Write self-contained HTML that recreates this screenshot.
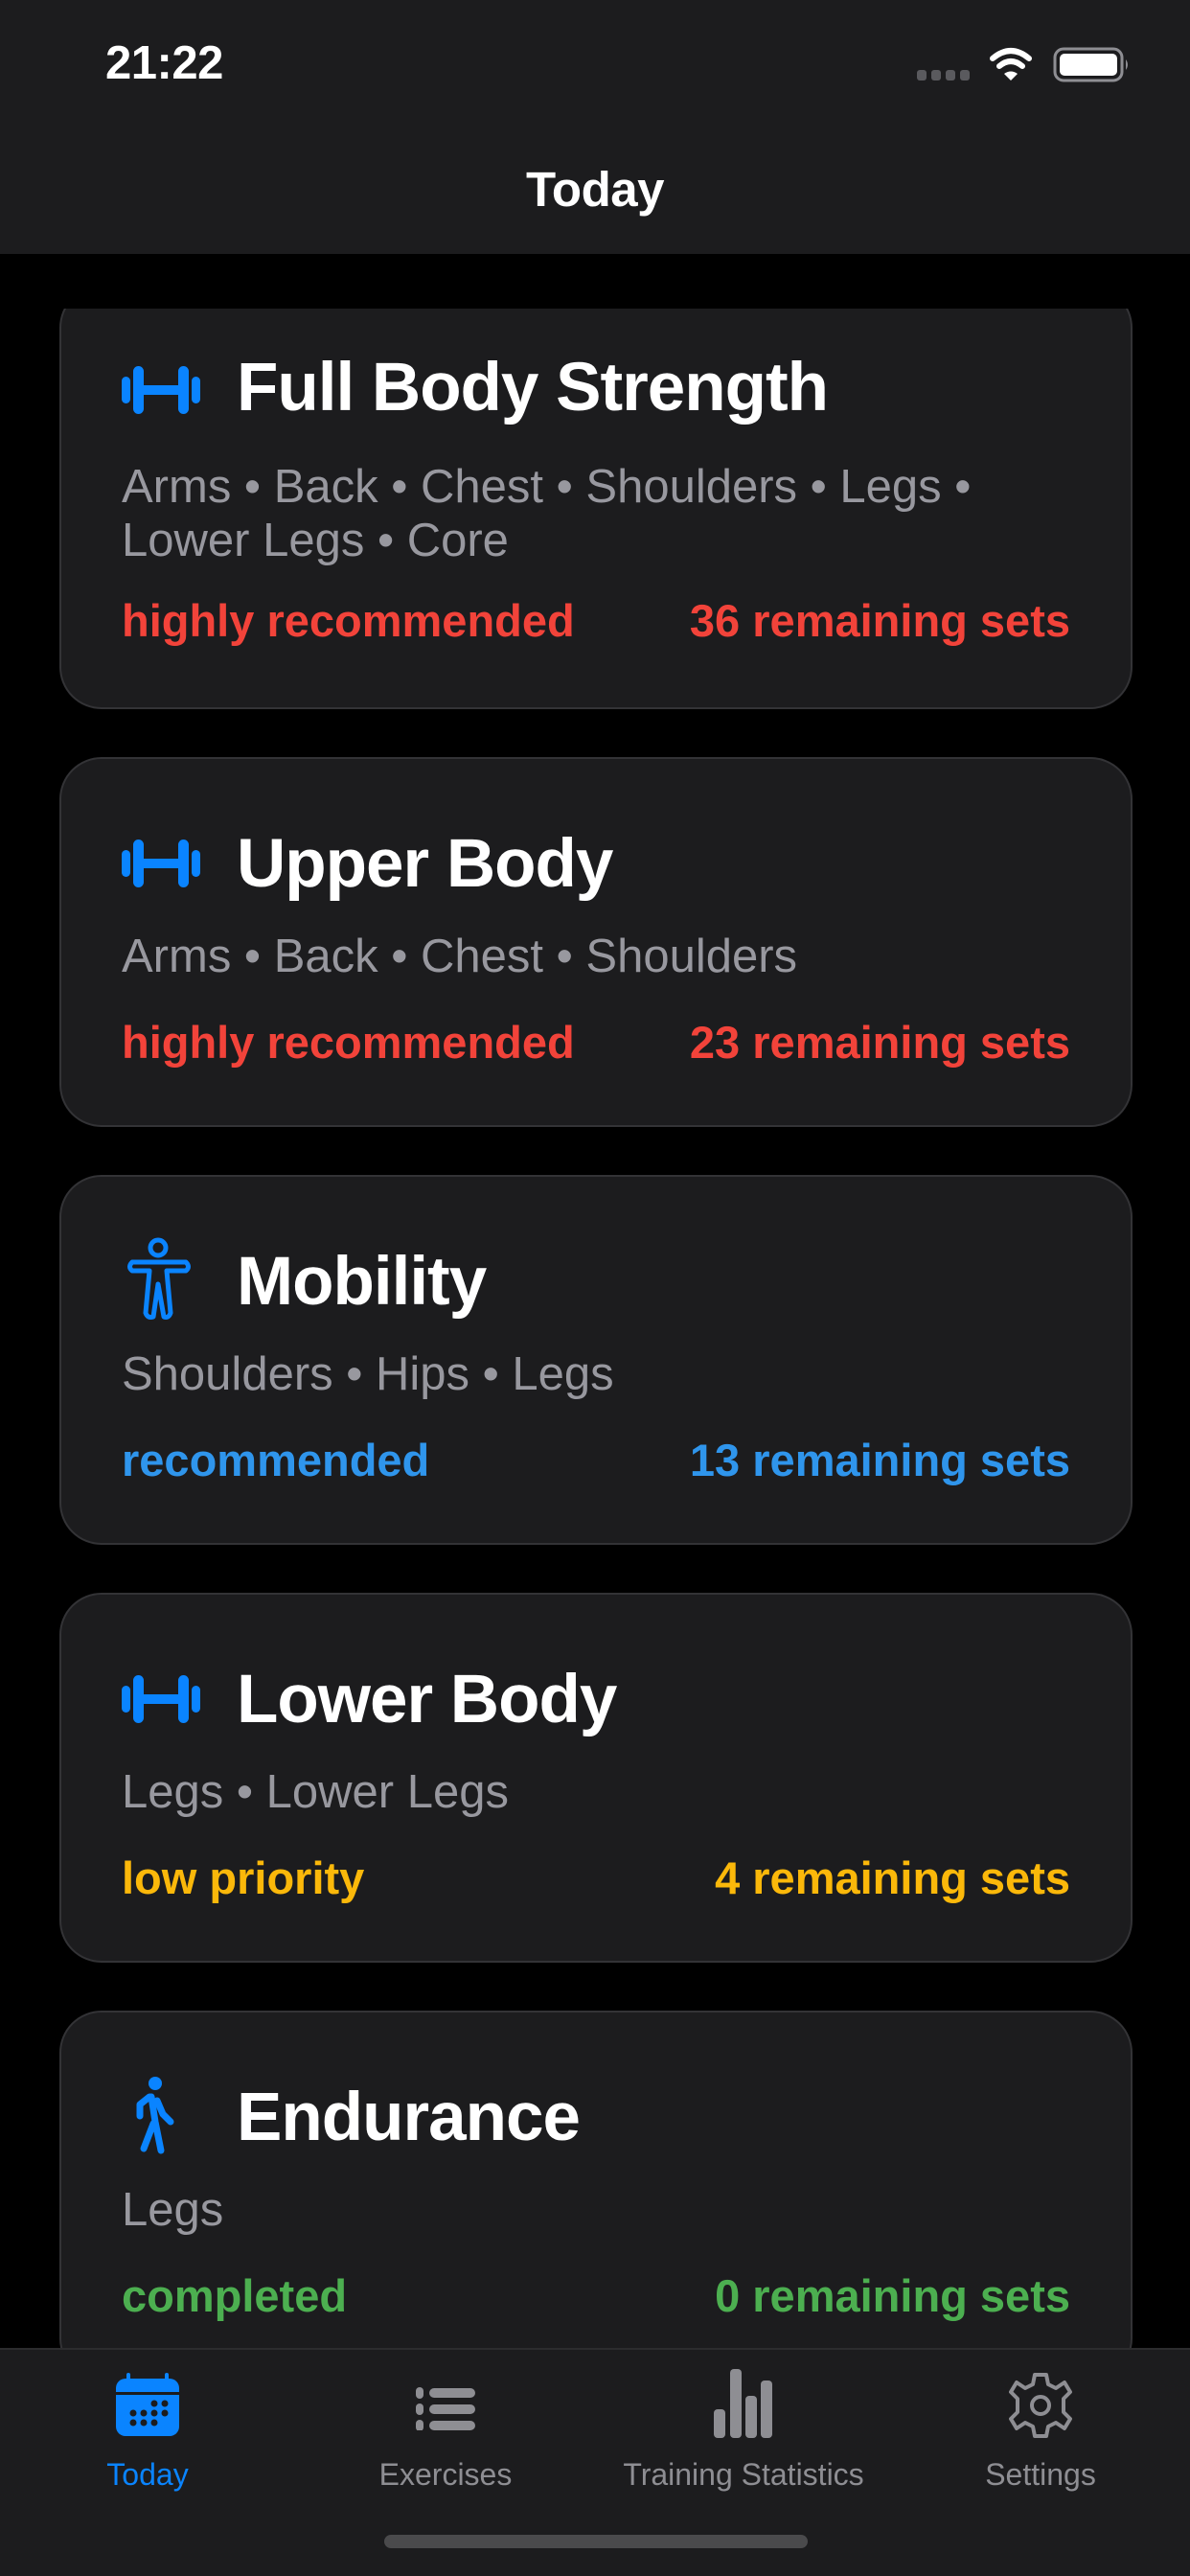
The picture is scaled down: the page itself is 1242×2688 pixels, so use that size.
<!DOCTYPE html>
<html><head><meta charset="utf-8"><style>
*{margin:0;padding:0;box-sizing:border-box}
body{width:1242px;height:2688px;background:#000;position:relative;overflow:hidden;font-family:"Liberation Sans",sans-serif;color:#fff}
.top{position:absolute;left:0;top:0;width:1242px;height:265px;background:#1c1c1e}
.time{position:absolute;left:110px;top:38px;font-size:49px;font-weight:bold;letter-spacing:-0.5px}
.nav{position:absolute;left:0;width:1242px;top:168px;text-align:center;font-size:51px;font-weight:bold;letter-spacing:-0.5px}
.scroll{position:absolute;left:0;top:322px;width:1242px;height:2128px;overflow:hidden}
.card{position:absolute;left:62px;width:1120px;background:#1c1c1e;border:2px solid #333336;border-radius:44px}
.title{position:absolute;left:183px;font-size:71px;font-weight:bold;letter-spacing:-1px;white-space:nowrap}
.icon{position:absolute;left:63px}
.sub{position:absolute;left:63px;font-size:49px;color:#98989f;line-height:56px;white-space:nowrap}
.st{position:absolute;left:63px;right:63px;font-size:47px;font-weight:bold;white-space:nowrap}
.st span{position:absolute;right:0;top:0}
.red{color:#f2433a}.blue{color:#2f95ec}.yel{color:#fbb80a}.grn{color:#4caf50}
.tab{position:absolute;left:0;top:2450px;width:1242px;height:238px;background:#1c1c1e;border-top:2px solid #2c2c2e}
.tl{position:absolute;top:112px;font-size:32px;color:#8e8e93;transform:translateX(-50%);white-space:nowrap}
.home{position:absolute;left:401px;top:2645px;width:442px;height:14px;border-radius:7px;background:#4a4a4c}
</style></head><body>
<div class="top">
 <div class="time">21:22</div>
 <svg style="position:absolute;left:950px;top:40px" width="240" height="60" viewBox="950 40 240 60">
  <g fill="#5a5a5e"><rect x="957" y="73" width="10" height="11" rx="3"/><rect x="972" y="73" width="10" height="11" rx="3"/><rect x="987" y="73" width="10" height="11" rx="3"/><rect x="1002" y="73" width="10" height="11" rx="3"/></g>
  <g fill="none" stroke="#fff" stroke-width="6" stroke-linecap="round"><path d="M1036 61 Q1055 45 1074 61"/><path d="M1043 69 Q1055 59 1067 69"/></g>
  <path d="M1048 77 L1055 84 L1062 77 Q1055 72 1048 77Z" fill="#fff"/>
  <rect x="1101" y="51" width="70" height="33" rx="9" fill="none" stroke="#8e8e93" stroke-width="3"/>
  <rect x="1106" y="56" width="60" height="23" rx="5" fill="#fff"/>
  <path d="M1175 62 Q1179 67.5 1175 73Z" fill="#8e8e93"/>
 </svg>
 <div class="nav">Today</div>
</div>

<div class="scroll">
 <div class="card" style="top:-24px;height:442px">
  <svg class="icon" style="top:80px" width="82" height="54" viewBox="0 0 82 54"><g fill="#0a84ff"><rect x="0" y="13" width="9" height="28" rx="4.5"/><rect x="12" y="2" width="11" height="50" rx="5.5"/><rect x="22" y="22" width="38" height="10"/><rect x="59" y="2" width="11" height="50" rx="5.5"/><rect x="73" y="13" width="9" height="28" rx="4.5"/></g></svg>
  <div class="title" style="top:64px">Full Body Strength</div>
  <div class="sub" style="top:180px">Arms • Back • Chest • Shoulders • Legs •<br>Lower Legs • Core</div>
  <div class="st red" style="top:320px">highly recommended<span>36 remaining sets</span></div>
 </div>
 <div class="card" style="top:468px;height:386px">
  <svg class="icon" style="top:82px" width="82" height="54" viewBox="0 0 82 54"><g fill="#0a84ff"><rect x="0" y="13" width="9" height="28" rx="4.5"/><rect x="12" y="2" width="11" height="50" rx="5.5"/><rect x="22" y="22" width="38" height="10"/><rect x="59" y="2" width="11" height="50" rx="5.5"/><rect x="73" y="13" width="9" height="28" rx="4.5"/></g></svg>
  <div class="title" style="top:69px">Upper Body</div>
  <div class="sub" style="top:178px">Arms • Back • Chest • Shoulders</div>
  <div class="st red" style="top:268px">highly recommended<span>23 remaining sets</span></div>
 </div>
 <div class="card" style="top:904px;height:386px">
  <svg class="icon" style="top:60px;left:66px" width="74" height="90" viewBox="130 1284 74 90"><g fill="none" stroke="#0a84ff" stroke-width="5" stroke-linejoin="round"><circle cx="165" cy="1298" r="8"/><path d="M138 1313 H194 Q199 1318 194 1322 H174 L178 1366 Q176 1372 171 1370 L165 1336 L160 1370 Q154 1372 152 1366 L156 1322 H138 Q133 1318 138 1313Z"/></g></svg>
  <div class="title" style="top:69px">Mobility</div>
  <div class="sub" style="top:178px">Shoulders • Hips • Legs</div>
  <div class="st blue" style="top:268px">recommended<span>13 remaining sets</span></div>
 </div>
 <div class="card" style="top:1340px;height:386px">
  <svg class="icon" style="top:82px" width="82" height="54" viewBox="0 0 82 54"><g fill="#0a84ff"><rect x="0" y="13" width="9" height="28" rx="4.5"/><rect x="12" y="2" width="11" height="50" rx="5.5"/><rect x="22" y="22" width="38" height="10"/><rect x="59" y="2" width="11" height="50" rx="5.5"/><rect x="73" y="13" width="9" height="28" rx="4.5"/></g></svg>
  <div class="title" style="top:69px">Lower Body</div>
  <div class="sub" style="top:178px">Legs • Lower Legs</div>
  <div class="st yel" style="top:268px">low priority<span>4 remaining sets</span></div>
 </div>
 <div class="card" style="top:1776px;height:386px">
  <svg class="icon" style="top:66px;left:74px" width="50" height="84" viewBox="0 0 50 84"><g fill="#0a84ff"><circle cx="24" cy="8" r="7"/></g><g fill="none" stroke="#0a84ff" stroke-width="7" stroke-linecap="round" stroke-linejoin="round"><path d="M20 22 L24 48 L30 78"/><path d="M22 50 L12 76"/><path d="M18 22 L8 30 L8 42"/><path d="M26 26 L32 40 L40 48"/></g></svg>
  <div class="title" style="top:69px">Endurance</div>
  <div class="sub" style="top:178px">Legs</div>
  <div class="st grn" style="top:268px">completed<span>0 remaining sets</span></div>
 </div>
</div>

<div class="tab">
 <svg style="position:absolute;left:121px;top:24px" width="66" height="66" viewBox="0 0 66 66"><rect x="0" y="6" width="66" height="60" rx="10" fill="#0a84ff"/><rect x="0" y="20" width="66" height="3" fill="#1c1c1e"/><rect x="11" y="0" width="4" height="10" rx="2" fill="#0a84ff"/><rect x="51" y="0" width="4" height="10" rx="2" fill="#0a84ff"/><g fill="#1c1c1e"><circle cx="40" cy="32" r="3.5"/><circle cx="51" cy="32" r="3.5"/><circle cx="18" cy="42" r="3.5"/><circle cx="29" cy="42" r="3.5"/><circle cx="40" cy="42" r="3.5"/><circle cx="51" cy="42" r="3.5"/><circle cx="18" cy="52" r="3.5"/><circle cx="29" cy="52" r="3.5"/><circle cx="40" cy="52" r="3.5"/></g></svg>
 <svg style="position:absolute;left:434px;top:34px" width="62" height="50" viewBox="0 0 62 50"><g fill="#8e8e93"><rect x="0" y="5" width="8" height="12" rx="4"/><rect x="14" y="6" width="48" height="10" rx="5"/><rect x="0" y="22" width="8" height="12" rx="4"/><rect x="14" y="23" width="48" height="10" rx="5"/><rect x="0" y="39" width="8" height="12" rx="4"/><rect x="14" y="40" width="48" height="10" rx="5"/></g></svg>
 <svg style="position:absolute;left:745px;top:20px" width="62" height="72" viewBox="0 0 62 72"><g fill="#8e8e93"><rect x="0" y="42" width="12" height="30" rx="4"/><rect x="17" y="0" width="12" height="72" rx="4"/><rect x="33" y="28" width="12" height="44" rx="4"/><rect x="49" y="12" width="12" height="60" rx="4"/></g></svg>
 <svg style="position:absolute;left:1052px;top:22px" width="68" height="72" viewBox="-34 -36 68 72"><path d="M-6 -32 H6 L8 -22 L16 -18 L25 -24 L31 -14 L24 -7 V7 L31 14 L25 24 L16 18 L8 22 L6 32 H-6 L-8 22 L-16 18 L-25 24 L-31 14 L-24 7 V-7 L-31 -14 L-25 -24 L-16 -18 L-8 -22Z" fill="none" stroke="#8e8e93" stroke-width="4" stroke-linejoin="round"/><circle cx="0" cy="0" r="9" fill="none" stroke="#8e8e93" stroke-width="4"/></svg>
 <div class="tl" style="left:154px;color:#0a84ff">Today</div>
 <div class="tl" style="left:465px">Exercises</div>
 <div class="tl" style="left:776px">Training Statistics</div>
 <div class="tl" style="left:1086px">Settings</div>
</div>
<div class="home"></div>
</body></html>
